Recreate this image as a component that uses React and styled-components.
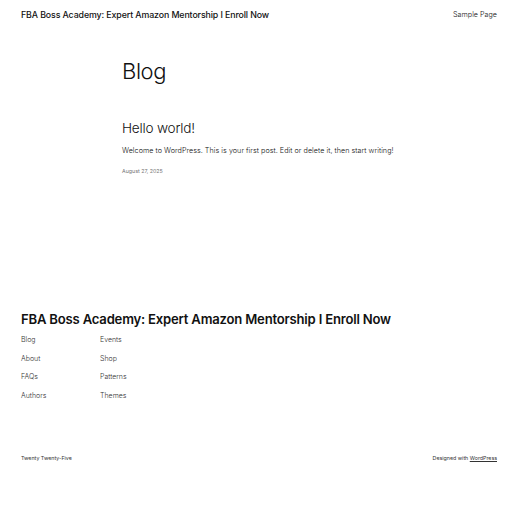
import React from "react";
import styled, { createGlobalStyle } from "styled-components";

const Global = createGlobalStyle`
  html, body { margin: 0; padding: 0; background: #fff; }
  body { font-family: Inter, "Noto Sans", sans-serif; color: #111; }
  * { box-sizing: border-box; }
`;

const Page = styled.div`
  width: 512px;
  min-height: 512px;
  display: flex;
  flex-direction: column;
`;

const Header = styled.header`
  display: flex;
  justify-content: space-between;
  align-items: center;
  padding: 5px 15px 0 21px;
  height: 24px;
`;

const SiteTitle = styled.div`
  font-size: 8.8px;
  font-weight: 500;
  letter-spacing: -0.1px;
`;

const NavLink = styled.a`
  font-size: 7.2px;
  font-weight: 300;
  color: #111;
  text-decoration: none;
`;

const Main = styled.main`
  padding: 34px 0 0 122px;
  height: 286px;
`;

const PageTitle = styled.h1`
  margin: 0;
  font-size: 22px;
  font-weight: 300;
  letter-spacing: -0.4px;
  line-height: 26px;
`;

const PostTitle = styled.h2`
  margin: 35px 0 0;
  font-size: 13.6px;
  font-weight: 300;
  letter-spacing: -0.2px;
  line-height: 18px;
`;

const Excerpt = styled.p`
  margin: 9px 0 0;
  font-size: 7.2px;
  font-weight: 300;
  line-height: 9px;
  letter-spacing: 0.05px;
`;

const PostDate = styled.div`
  margin-top: 13px;
  font-size: 5.3px;
  color: #777;
`;

const Footer = styled.footer`
  padding: 0 15px 0 21px;
`;

const FooterTitle = styled.div`
  font-size: 13.1px;
  font-weight: 600;
  letter-spacing: -0.2px;
  line-height: 18px;
`;

const Columns = styled.div`
  display: grid;
  grid-template-columns: 79px 79px;
  grid-auto-flow: column;
  grid-template-rows: repeat(4, 18.7px);
  margin-top: 7px;
`;

const FooterLink = styled.a`
  font-size: 7px;
  font-weight: 300;
  color: #333;
  text-decoration: none;
  line-height: 10px;
`;

const Bottom = styled.div`
  display: flex;
  justify-content: space-between;
  margin-top: 45px;
  font-size: 5.3px;
  color: #333;
`;

const Credit = styled.span`
  a { color: #333; text-decoration: underline; }
`;

export default function App() {
  const col1 = ["Blog", "About", "FAQs", "Authors"];
  const col2 = ["Events", "Shop", "Patterns", "Themes"];
  return (
    <Page>
      <Global />
      <Header>
        <SiteTitle>FBA Boss Academy: Expert Amazon Mentorship I Enroll Now</SiteTitle>
        <NavLink href="#">Sample Page</NavLink>
      </Header>
      <Main>
        <PageTitle>Blog</PageTitle>
        <PostTitle>Hello world!</PostTitle>
        <Excerpt>Welcome to WordPress. This is your first post. Edit or delete it, then start writing!</Excerpt>
        <PostDate>August 27, 2025</PostDate>
      </Main>
      <Footer>
        <FooterTitle>FBA Boss Academy: Expert Amazon Mentorship I Enroll Now</FooterTitle>
        <Columns>
          {[...col1, ...col2].map((l) => (
            <FooterLink key={l} href="#">{l}</FooterLink>
          ))}
        </Columns>
        <Bottom>
          <span>Twenty Twenty-Five</span>
          <Credit>Designed with <a href="#">WordPress</a></Credit>
        </Bottom>
      </Footer>
    </Page>
  );
}
